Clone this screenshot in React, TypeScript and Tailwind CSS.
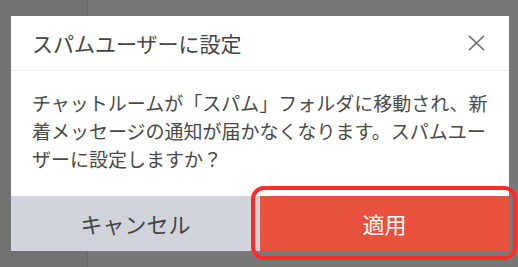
const jp = { fontFamily: '"Noto Sans CJK JP", "Noto Sans", sans-serif' };

export default function App() {
  return (
    <div className="relative h-[267px] w-[518px] overflow-hidden" style={jp}>
      {/* page behind the overlay */}
      <div className="flex h-full w-full">
        <div className="h-full w-[88px] border-r border-[#666666] bg-[#727272]" />
        <div className="h-full flex-1 bg-[#787878]" />
      </div>

      {/* dialog */}
      <div className="absolute left-[11px] top-[16px] flex w-[498px] flex-col bg-white">
        <div className="flex h-[55px] items-center justify-between border-b border-[#ececec] pl-[21px] pr-[24px]">
          <h1 className="text-[21px] leading-none text-[#444444]">スパムユーザーに設定</h1>
          <svg width="17" height="16" viewBox="0 0 17 16" className="text-[#777777]">
            <path d="M1 0.8 L16 15.2 M16 0.8 L1 15.2" stroke="currentColor" strokeWidth="1.7" fill="none" />
          </svg>
        </div>
        <p className="h-[125px] px-[21px] pt-[18px] text-[19px] leading-[28px] text-[#4a4a4a]">
          チャットルームが「スパム」フォルダに移動され、新
          <br />
          着メッセージの通知が届かなくなります。スパムユー
          <br />
          ザーに設定しますか？
        </p>
        <div className="flex h-[55px]">
          <button className="flex flex-1 items-center justify-center bg-[#d0d4da] text-[22px] text-[#444444]">
            キャンセル
          </button>
          <button className="flex flex-1 items-center justify-center bg-[#e9513f] text-[22px] text-white">
            適用
          </button>
        </div>
      </div>

      {/* annotation outline */}
      <div className="pointer-events-none absolute left-[251px] top-[186px] h-[74px] w-[266px] rounded-[13px] border-4 border-[#ff2b2b]" />
    </div>
  );
}
